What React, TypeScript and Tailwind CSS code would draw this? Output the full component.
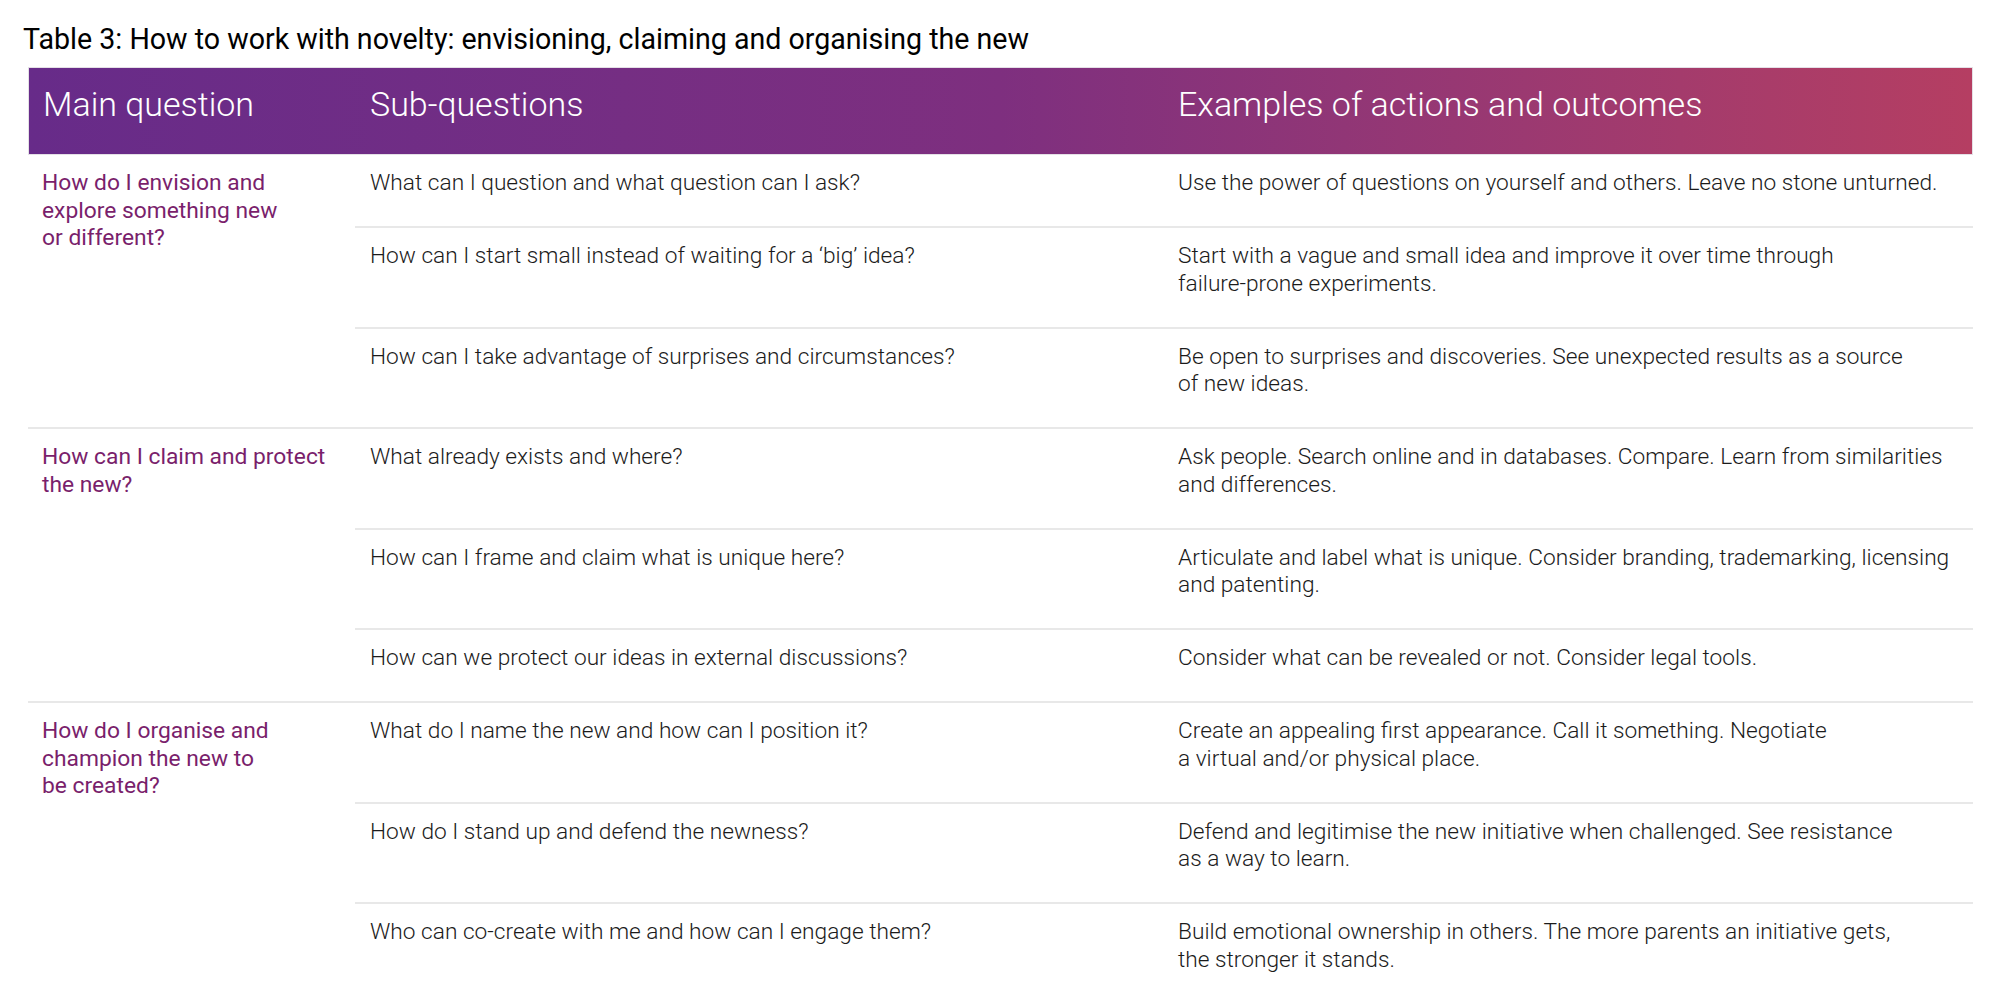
import React from 'react';

type SubRow = { q: string; a: string[] };
type Group = { main: string[]; rows: SubRow[] };

const groups: Group[] = [
    {
        main: ['How do I envision and', 'explore something new', 'or different?'],
        rows: [
            { q: 'What can I question and what question can I ask?', a: ['Use the power of questions on yourself and others. Leave no stone unturned.'] },
            { q: 'How can I start small instead of waiting for a \u2018big\u2019 idea?', a: ['Start with a vague and small idea and improve it over time through', 'failure-prone experiments.'] },
            { q: 'How can I take advantage of surprises and circumstances?', a: ['Be open to surprises and discoveries. See unexpected results as a source', 'of new ideas.'] },
        ],
    },
    {
        main: ['How can I claim and protect', 'the new?'],
        rows: [
            { q: 'What already exists and where?', a: ['Ask people. Search online and in databases. Compare. Learn from similarities', 'and differences.'] },
            { q: 'How can I frame and claim what is unique here?', a: ['Articulate and label what is unique. Consider branding, trademarking, licensing', 'and patenting.'] },
            { q: 'How can we protect our ideas in external discussions?', a: ['Consider what can be revealed or not. Consider legal tools.'] },
        ],
    },
    {
        main: ['How do I organise and', 'champion the new to', 'be created?'],
        rows: [
            { q: 'What do I name the new and how can I position it?', a: ['Create an appealing first appearance. Call it something. Negotiate', 'a virtual and/or physical place.'] },
            { q: 'How do I stand up and defend the newness?', a: ['Defend and legitimise the new initiative when challenged. See resistance', 'as a way to learn.'] },
            { q: 'Who can co-create with me and how can I engage them?', a: ['Build emotional ownership in others. The more parents an initiative gets,', 'the stronger it stands.'] },
        ],
    },
];

const Lines: React.FC<{ lines: string[] }> = ({ lines }) => (
    <>
        {lines.map((l, i) => (
            <span key={i} className="block whitespace-nowrap">{l}</span>
        ))}
    </>
);

export default function App() {
    return (
        <div className="min-h-screen bg-white font-['Roboto',sans-serif] text-[#1b1b1b]">
            <div className="pl-[23px] pt-[21px] pb-[10px]">
                <h1 className="text-[28.6px] leading-[36px] font-normal text-black whitespace-nowrap">
                    Table 3: How to work with novelty: envisioning, claiming and organising the new
                </h1>
            </div>

            <div className="pl-[28px] pr-[27px]">
                {/* header */}
                <div className="grid grid-cols-[327px_808px_1fr] h-[88px] border border-[#e4e0e6] bg-gradient-to-r from-[#672b89] via-[#7e2f7f] to-[#b53e62] text-white font-light text-[34px] leading-[40px]">
                    <div className="pl-[14px] pt-[16px]">Main question</div>
                    <div className="pl-[14px] pt-[16px]">Sub-questions</div>
                    <div className="pl-[14px] pt-[16px]">Examples of actions and outcomes</div>
                </div>

                {/* body */}
                {groups.map((g, gi) => (
                    <div
                        key={gi}
                        className={`grid grid-cols-[327px_1fr] ${gi < groups.length - 1 ? 'border-b-2 border-[#e8e8e8]' : ''}`}
                    >
                        <div className="pl-[14px] pt-[14px] text-[22.8px] leading-[27.5px] font-normal text-[#7a1f6c]">
                            <Lines lines={g.main} />
                        </div>
                        <div className="flex flex-col">
                            {g.rows.map((r, ri) => (
                                <div
                                    key={ri}
                                    className={`grid grid-cols-[808px_1fr] pt-[14px] pb-[29.5px] text-[22.7px] leading-[27.5px] font-light ${ri < g.rows.length - 1 ? 'border-b-2 border-[#e8e8e8]' : ''}`}
                                >
                                    <div className="pl-[15px] whitespace-nowrap">{r.q}</div>
                                    <div className="pl-[15px]">
                                        <Lines lines={r.a} />
                                    </div>
                                </div>
                            ))}
                        </div>
                    </div>
                ))}
            </div>
        </div>
    );
}
